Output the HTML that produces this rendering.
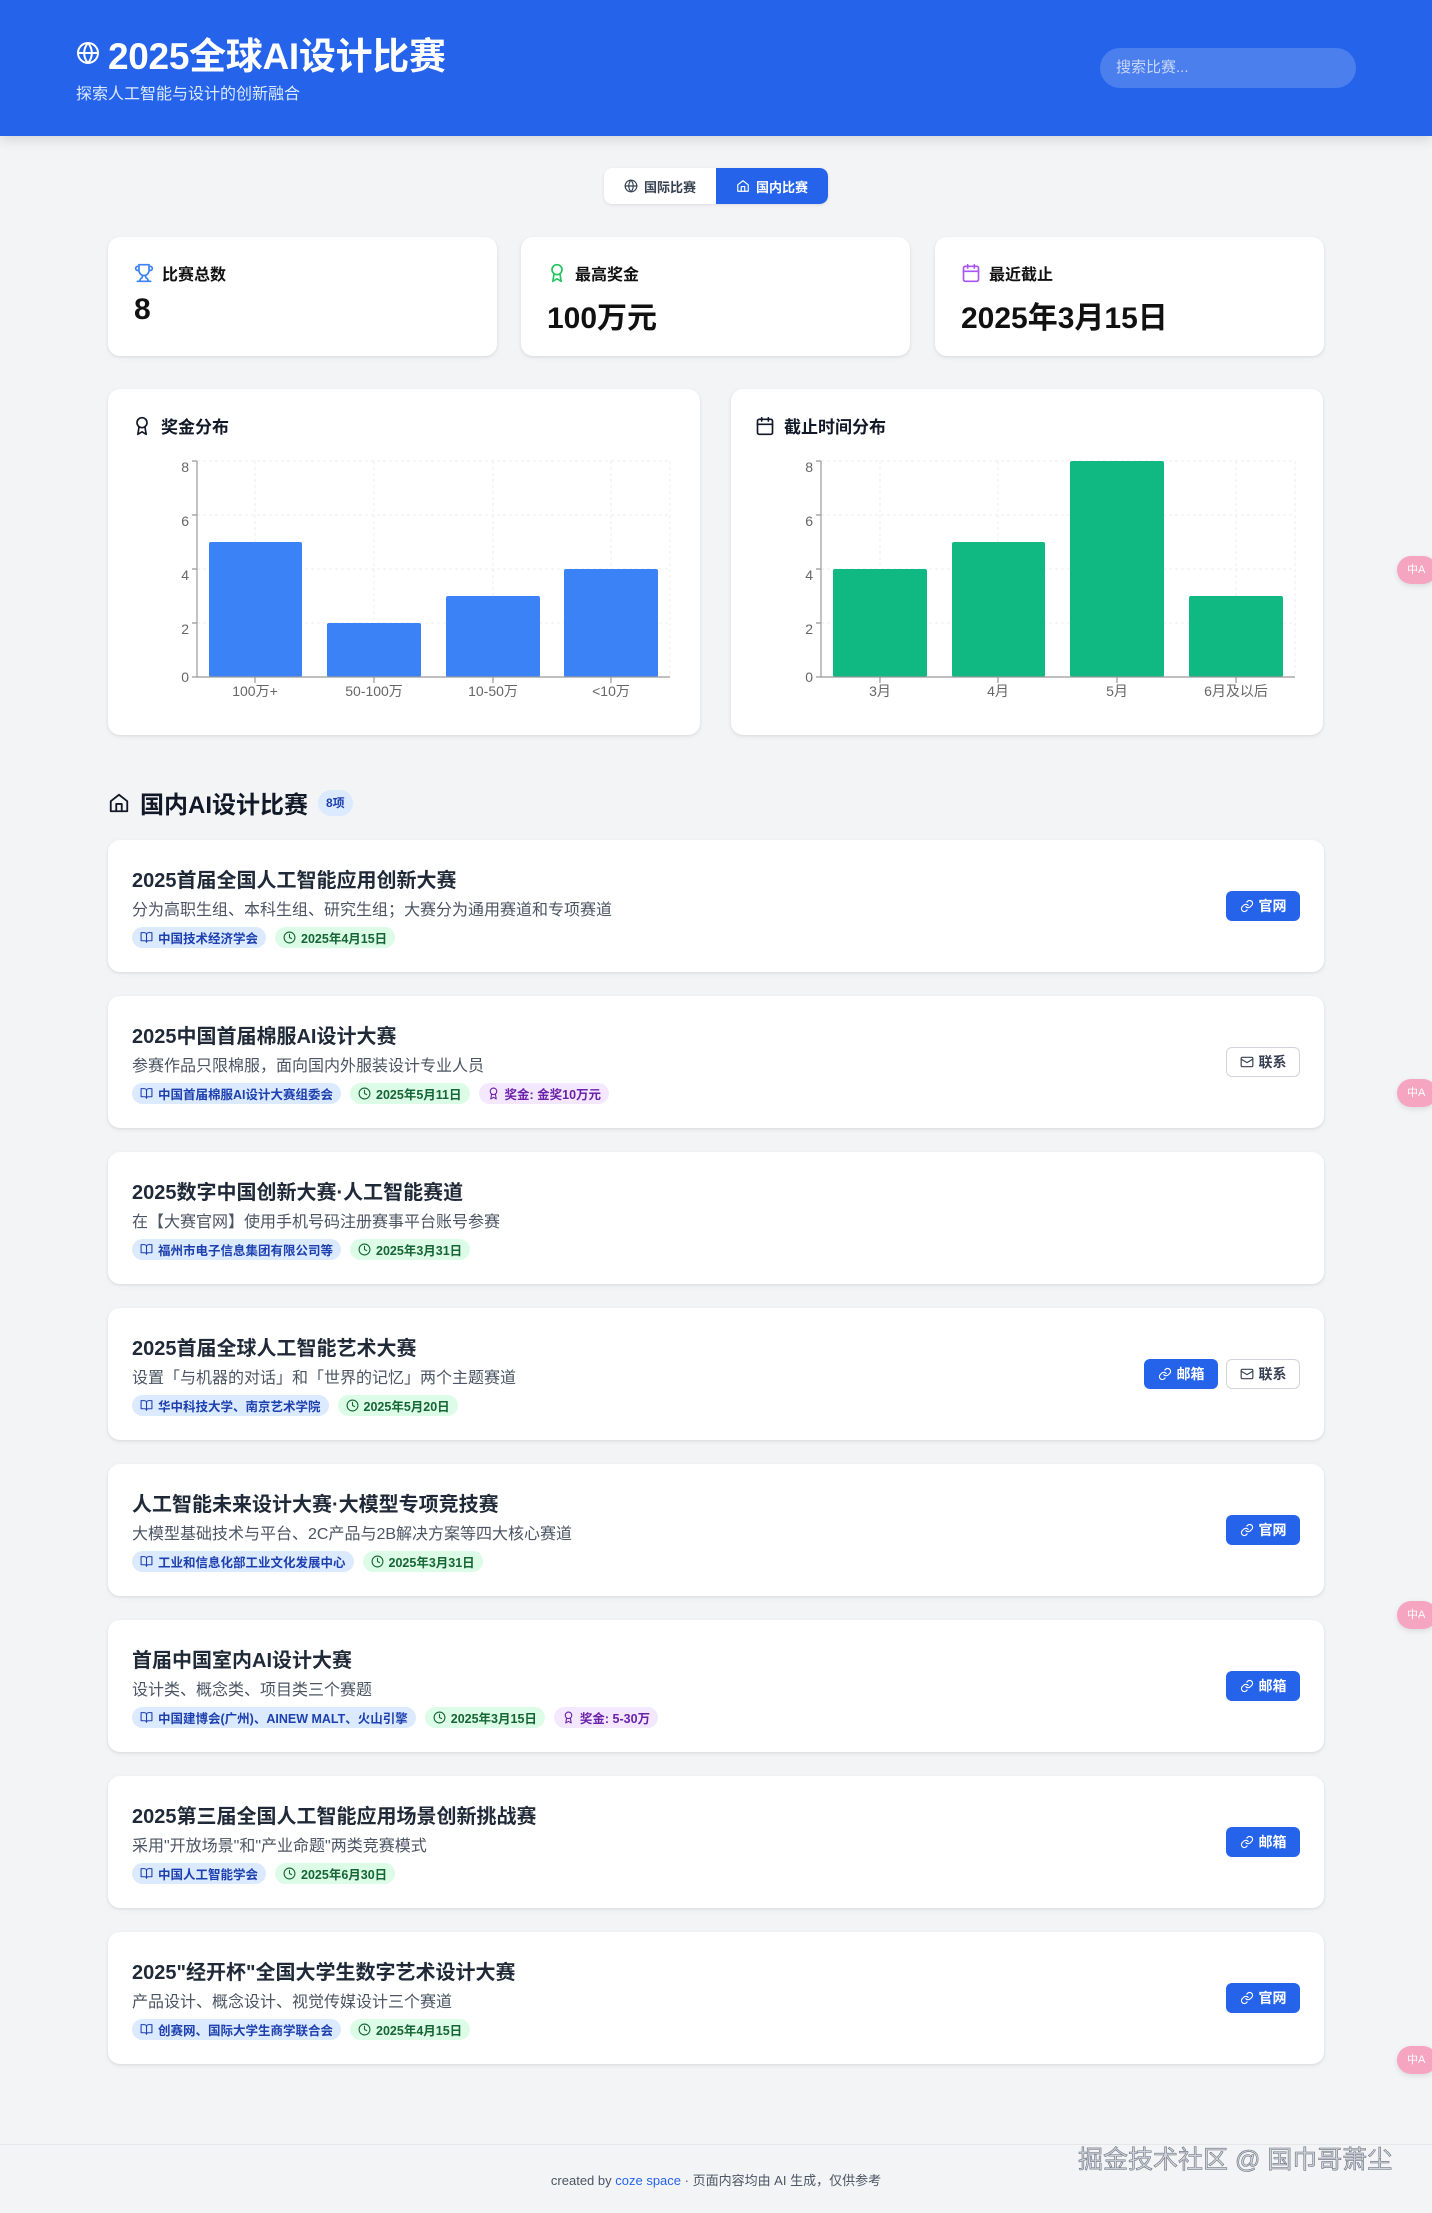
<!DOCTYPE html>
<html><head><meta charset="utf-8">
<style>
*{box-sizing:border-box;margin:0;padding:0}
body{width:1432px;height:2213px;background:#f3f4f6;font-family:"Liberation Sans","Noto Sans CJK SC",sans-serif;position:relative;overflow:hidden;color:#111827}
.abs{position:absolute}
header{position:absolute;left:0;top:0;width:1432px;height:136px;background:#2563eb;box-shadow:0 4px 12px rgba(0,0,0,.12)}
.card{position:absolute;background:#fff;border-radius:12px;box-shadow:0 1px 3px rgba(0,0,0,.08),0 2px 6px rgba(0,0,0,.04)}
svg.i{fill:none;stroke:currentColor;stroke-width:2;stroke-linecap:round;stroke-linejoin:round}
.stl{position:absolute;left:26px;top:24px;font-size:16px;font-weight:bold;display:flex;align-items:center;gap:8px;color:#111}
.stv{position:absolute;left:26px;top:56px;font-size:30px;font-weight:bold;color:#111}
.ct{position:absolute;left:24px;top:24px;font-size:17px;font-weight:bold;display:flex;align-items:center;gap:9px}
.comp h3{position:absolute;left:24px;top:24px;font-size:20px;font-weight:bold;color:#1f2937}
.comp p{position:absolute;left:24px;top:56px;font-size:16px;color:#4b5563}
.tags{position:absolute;left:24px;top:87px;display:flex;gap:9px}
.tag{height:21px;border-radius:11px;font-size:12.5px;font-weight:bold;padding:0 8px;display:flex;align-items:center;gap:5px;white-space:nowrap}
.tb{background:#dbeafe;color:#1e40af}.tg{background:#dcfce7;color:#166534}.tp{background:#f3e8ff;color:#6b21a8}
.btns{position:absolute;right:24px;top:51px;display:flex;gap:8px}
.btn{height:30px;width:74px;border-radius:6px;font-size:14px;font-weight:bold;display:flex;align-items:center;justify-content:center;gap:5px}
.bp{background:#2563eb;color:#fff}.bo{background:#fff;color:#374151;border:1px solid #d1d5db}
.fl{position:absolute;left:1397px;width:40px;height:28px;border-radius:14px;background:#f6a5c0;color:#fff;font-size:11px;padding-left:10px;line-height:28px;box-shadow:0 2px 6px rgba(0,0,0,.1)}
</style></head><body>
<header>
 <div class="abs" style="left:76px;top:26px;display:flex;align-items:center;gap:8px;color:#fff">
  <svg class="i" width="24" height="24" viewBox="0 0 24 24"><circle cx="12" cy="12" r="10"/><path d="M2 12h20M12 2a15 15 0 0 1 0 20M12 2a15 15 0 0 0 0 20"/></svg>
  <span style="font-size:37px;font-weight:bold;letter-spacing:-0.3px">2025全球AI设计比赛</span>
 </div>
 <div class="abs" style="left:76px;top:80px;font-size:16px;color:#dbeafe">探索人工智能与设计的创新融合</div>
 <div class="abs" style="left:1100px;top:48px;width:256px;height:40px;border-radius:20px;background:rgba(255,255,255,.18);color:#c7d7fb;font-size:15px;line-height:40px;padding-left:16px">搜索比赛...</div>
</header>

<div class="abs" style="left:604px;top:168px;width:224px;height:36px;border-radius:8px;background:#fff;box-shadow:0 1px 3px rgba(0,0,0,.1);display:flex;overflow:hidden;font-size:13px;font-weight:bold">
 <div style="width:112px;display:flex;align-items:center;justify-content:center;gap:6px;color:#374151"><svg class="i" width="14" height="14" viewBox="0 0 24 24"><circle cx="12" cy="12" r="10"/><path d="M2 12h20M12 2a15 15 0 0 1 0 20M12 2a15 15 0 0 0 0 20"/></svg>国际比赛</div>
 <div style="width:112px;display:flex;align-items:center;justify-content:center;gap:6px;background:#2563eb;color:#fff;border-radius:0 8px 8px 0"><svg class="i" width="14" height="14" viewBox="0 0 24 24"><path d="M3 10l9-7 9 7v11H3z"/><path d="M9 21v-8h6v8"/></svg>国内比赛</div>
</div>

<div class="card" style="left:108px;top:237px;width:389px;height:119px">
 <div class="stl"><svg class="i" width="20" height="20" viewBox="0 0 24 24" style="color:#3b82f6"><path d="M6 9H4.5a2.5 2.5 0 0 1 0-5H6M18 9h1.5a2.5 2.5 0 0 0 0-5H18M4 22h16M10 14.66V17c0 .55-.47.98-.97 1.21C7.85 18.75 7 20.24 7 22M14 14.66V17c0 .55.47.98.97 1.21C16.15 18.75 17 20.24 17 22M18 2H6v7a6 6 0 0 0 12 0V2z"/></svg>比赛总数</div>
 <div class="stv">8</div>
</div>
<div class="card" style="left:521px;top:237px;width:389px;height:119px">
 <div class="stl"><svg class="i" width="20" height="20" viewBox="0 0 24 24" style="color:#22c55e"><circle cx="12" cy="8" r="6"/><path d="M15.5 12.9L17 22l-5-3-5 3 1.5-9.1"/></svg>最高奖金</div>
 <div class="stv">100万元</div>
</div>
<div class="card" style="left:935px;top:237px;width:389px;height:119px">
 <div class="stl"><svg class="i" width="20" height="20" viewBox="0 0 24 24" style="color:#a855f7"><rect x="3" y="4" width="18" height="18" rx="2"/><path d="M16 2v4M8 2v4M3 10h18"/></svg>最近截止</div>
 <div class="stv">2025年3月15日</div>
</div>

<div class="card" style="left:108px;top:389px;width:592px;height:346px">
 <div class="ct"><svg class="i" width="20" height="20" viewBox="0 0 24 24"><circle cx="12" cy="8" r="6"/><path d="M15.5 12.9L17 22l-5-3-5 3 1.5-9.1"/></svg>奖金分布</div>
</div>
<div class="card" style="left:731px;top:389px;width:592px;height:346px">
 <div class="ct"><svg class="i" width="20" height="20" viewBox="0 0 24 24"><rect x="3" y="4" width="18" height="18" rx="2"/><path d="M16 2v4M8 2v4M3 10h18"/></svg>截止时间分布</div>
</div>
<svg class="abs" style="left:0;top:0" width="1432" height="760" font-family="Liberation Sans, Noto Sans CJK SC, sans-serif" font-size="14">
 <g stroke="#eee" stroke-dasharray="3 3" fill="none">
  <path d="M197 461H670M197 515H670M197 569H670M197 623H670M255 461V677M374 461V677M493 461V677M611 461V677M670 461V677"/>
  <path d="M821 461H1295M821 515H1295M821 569H1295M821 623H1295M880 461V677M998 461V677M1117 461V677M1236 461V677M1295 461V677"/>
 </g>
 <g fill="#3b82f6">
  <rect x="209" y="542" width="93" height="135" rx="2"/><rect x="327" y="623" width="94" height="54" rx="2"/><rect x="446" y="596" width="94" height="81" rx="2"/><rect x="564" y="569" width="94" height="108" rx="2"/>
 </g>
 <g fill="#10b981">
  <rect x="833" y="569" width="94" height="108" rx="2"/><rect x="952" y="542" width="93" height="135" rx="2"/><rect x="1070" y="461" width="94" height="216" rx="2"/><rect x="1189" y="596" width="94" height="81" rx="2"/>
 </g>
 <g stroke="#999" stroke-width="1.2" fill="none">
  <path d="M197 461V677H670M192 461H197M192 515H197M192 569H197M192 623H197M192 677H197M255 677V683M374 677V683M493 677V683M611 677V683"/>
  <path d="M821 461V677H1295M816 461H821M816 515H821M816 569H821M816 623H821M816 677H821M880 677V683M998 677V683M1117 677V683M1236 677V683"/>
 </g>
 <g text-anchor="end" fill="#666"><text x="189" y="472">8</text><text x="189" y="526">6</text><text x="189" y="580">4</text><text x="189" y="634">2</text><text x="189" y="682">0</text>
 <text x="813" y="472">8</text><text x="813" y="526">6</text><text x="813" y="580">4</text><text x="813" y="634">2</text><text x="813" y="682">0</text></g>
 <g text-anchor="middle" fill="#666"><text x="255" y="696">100万+</text><text x="374" y="696">50-100万</text><text x="493" y="696">10-50万</text><text x="611" y="696">&lt;10万</text>
 <text x="880" y="696">3月</text><text x="998" y="696">4月</text><text x="1117" y="696">5月</text><text x="1236" y="696">6月及以后</text></g>
</svg>

<div class="abs" style="left:108px;top:785px;display:flex;align-items:center;gap:10px">
 <svg class="i" width="22" height="22" viewBox="0 0 24 24"><path d="M3 10l9-7 9 7v11H3z"/><path d="M9 21v-8h6v8"/></svg>
 <span style="font-size:24px;font-weight:bold">国内AI设计比赛</span>
 <span style="background:#dbeafe;color:#1e40af;font-size:12px;font-weight:bold;border-radius:13px;padding:0 8px;height:26px;line-height:26px">8项</span>
</div>

<div class="card comp" style="left:108px;top:840px;width:1216px;height:132px">
 <h3>2025首届全国人工智能应用创新大赛</h3><p>分为高职生组、本科生组、研究生组；大赛分为通用赛道和专项赛道</p>
 <div class="tags"><span class="tag tb"><svg class="i" width="13" height="13" viewBox="0 0 24 24"><path d="M2 3h6a4 4 0 0 1 4 4v14a3 3 0 0 0-3-3H2zM22 3h-6a4 4 0 0 0-4 4v14a3 3 0 0 1 3-3h7z"/></svg>中国技术经济学会</span><span class="tag tg"><svg class="i" width="13" height="13" viewBox="0 0 24 24"><circle cx="12" cy="12" r="10"/><path d="M12 6v6l4 2"/></svg>2025年4月15日</span></div>
 <div class="btns"><span class="btn bp"><svg class="i" width="14" height="14" viewBox="0 0 24 24"><path d="M10 13a5 5 0 0 0 7.5.5l3-3a5 5 0 0 0-7-7l-1.7 1.7M14 11a5 5 0 0 0-7.5-.5l-3 3a5 5 0 0 0 7 7l1.7-1.7"/></svg>官网</span></div>
</div>
<div class="card comp" style="left:108px;top:996px;width:1216px;height:132px">
 <h3>2025中国首届棉服AI设计大赛</h3><p>参赛作品只限棉服，面向国内外服装设计专业人员</p>
 <div class="tags"><span class="tag tb"><svg class="i" width="13" height="13" viewBox="0 0 24 24"><path d="M2 3h6a4 4 0 0 1 4 4v14a3 3 0 0 0-3-3H2zM22 3h-6a4 4 0 0 0-4 4v14a3 3 0 0 1 3-3h7z"/></svg>中国首届棉服AI设计大赛组委会</span><span class="tag tg"><svg class="i" width="13" height="13" viewBox="0 0 24 24"><circle cx="12" cy="12" r="10"/><path d="M12 6v6l4 2"/></svg>2025年5月11日</span><span class="tag tp"><svg class="i" width="13" height="13" viewBox="0 0 24 24"><circle cx="12" cy="8" r="6"/><path d="M15.5 12.9L17 22l-5-3-5 3 1.5-9.1"/></svg>奖金: 金奖10万元</span></div>
 <div class="btns"><span class="btn bo"><svg class="i" width="14" height="14" viewBox="0 0 24 24"><rect x="2" y="4" width="20" height="16" rx="2"/><path d="M22 7l-10 6L2 7"/></svg>联系</span></div>
</div>
<div class="card comp" style="left:108px;top:1152px;width:1216px;height:132px">
 <h3>2025数字中国创新大赛·人工智能赛道</h3><p>在【大赛官网】使用手机号码注册赛事平台账号参赛</p>
 <div class="tags"><span class="tag tb"><svg class="i" width="13" height="13" viewBox="0 0 24 24"><path d="M2 3h6a4 4 0 0 1 4 4v14a3 3 0 0 0-3-3H2zM22 3h-6a4 4 0 0 0-4 4v14a3 3 0 0 1 3-3h7z"/></svg>福州市电子信息集团有限公司等</span><span class="tag tg"><svg class="i" width="13" height="13" viewBox="0 0 24 24"><circle cx="12" cy="12" r="10"/><path d="M12 6v6l4 2"/></svg>2025年3月31日</span></div>
</div>
<div class="card comp" style="left:108px;top:1308px;width:1216px;height:132px">
 <h3>2025首届全球人工智能艺术大赛</h3><p>设置「与机器的对话」和「世界的记忆」两个主题赛道</p>
 <div class="tags"><span class="tag tb"><svg class="i" width="13" height="13" viewBox="0 0 24 24"><path d="M2 3h6a4 4 0 0 1 4 4v14a3 3 0 0 0-3-3H2zM22 3h-6a4 4 0 0 0-4 4v14a3 3 0 0 1 3-3h7z"/></svg>华中科技大学、南京艺术学院</span><span class="tag tg"><svg class="i" width="13" height="13" viewBox="0 0 24 24"><circle cx="12" cy="12" r="10"/><path d="M12 6v6l4 2"/></svg>2025年5月20日</span></div>
 <div class="btns"><span class="btn bp"><svg class="i" width="14" height="14" viewBox="0 0 24 24"><path d="M10 13a5 5 0 0 0 7.5.5l3-3a5 5 0 0 0-7-7l-1.7 1.7M14 11a5 5 0 0 0-7.5-.5l-3 3a5 5 0 0 0 7 7l1.7-1.7"/></svg>邮箱</span><span class="btn bo"><svg class="i" width="14" height="14" viewBox="0 0 24 24"><rect x="2" y="4" width="20" height="16" rx="2"/><path d="M22 7l-10 6L2 7"/></svg>联系</span></div>
</div>
<div class="card comp" style="left:108px;top:1464px;width:1216px;height:132px">
 <h3>人工智能未来设计大赛·大模型专项竞技赛</h3><p>大模型基础技术与平台、2C产品与2B解决方案等四大核心赛道</p>
 <div class="tags"><span class="tag tb"><svg class="i" width="13" height="13" viewBox="0 0 24 24"><path d="M2 3h6a4 4 0 0 1 4 4v14a3 3 0 0 0-3-3H2zM22 3h-6a4 4 0 0 0-4 4v14a3 3 0 0 1 3-3h7z"/></svg>工业和信息化部工业文化发展中心</span><span class="tag tg"><svg class="i" width="13" height="13" viewBox="0 0 24 24"><circle cx="12" cy="12" r="10"/><path d="M12 6v6l4 2"/></svg>2025年3月31日</span></div>
 <div class="btns"><span class="btn bp"><svg class="i" width="14" height="14" viewBox="0 0 24 24"><path d="M10 13a5 5 0 0 0 7.5.5l3-3a5 5 0 0 0-7-7l-1.7 1.7M14 11a5 5 0 0 0-7.5-.5l-3 3a5 5 0 0 0 7 7l1.7-1.7"/></svg>官网</span></div>
</div>
<div class="card comp" style="left:108px;top:1620px;width:1216px;height:132px">
 <h3>首届中国室内AI设计大赛</h3><p>设计类、概念类、项目类三个赛题</p>
 <div class="tags"><span class="tag tb"><svg class="i" width="13" height="13" viewBox="0 0 24 24"><path d="M2 3h6a4 4 0 0 1 4 4v14a3 3 0 0 0-3-3H2zM22 3h-6a4 4 0 0 0-4 4v14a3 3 0 0 1 3-3h7z"/></svg>中国建博会(广州)、AINEW MALT、火山引擎</span><span class="tag tg"><svg class="i" width="13" height="13" viewBox="0 0 24 24"><circle cx="12" cy="12" r="10"/><path d="M12 6v6l4 2"/></svg>2025年3月15日</span><span class="tag tp"><svg class="i" width="13" height="13" viewBox="0 0 24 24"><circle cx="12" cy="8" r="6"/><path d="M15.5 12.9L17 22l-5-3-5 3 1.5-9.1"/></svg>奖金: 5-30万</span></div>
 <div class="btns"><span class="btn bp"><svg class="i" width="14" height="14" viewBox="0 0 24 24"><path d="M10 13a5 5 0 0 0 7.5.5l3-3a5 5 0 0 0-7-7l-1.7 1.7M14 11a5 5 0 0 0-7.5-.5l-3 3a5 5 0 0 0 7 7l1.7-1.7"/></svg>邮箱</span></div>
</div>
<div class="card comp" style="left:108px;top:1776px;width:1216px;height:132px">
 <h3>2025第三届全国人工智能应用场景创新挑战赛</h3><p>采用"开放场景"和"产业命题"两类竞赛模式</p>
 <div class="tags"><span class="tag tb"><svg class="i" width="13" height="13" viewBox="0 0 24 24"><path d="M2 3h6a4 4 0 0 1 4 4v14a3 3 0 0 0-3-3H2zM22 3h-6a4 4 0 0 0-4 4v14a3 3 0 0 1 3-3h7z"/></svg>中国人工智能学会</span><span class="tag tg"><svg class="i" width="13" height="13" viewBox="0 0 24 24"><circle cx="12" cy="12" r="10"/><path d="M12 6v6l4 2"/></svg>2025年6月30日</span></div>
 <div class="btns"><span class="btn bp"><svg class="i" width="14" height="14" viewBox="0 0 24 24"><path d="M10 13a5 5 0 0 0 7.5.5l3-3a5 5 0 0 0-7-7l-1.7 1.7M14 11a5 5 0 0 0-7.5-.5l-3 3a5 5 0 0 0 7 7l1.7-1.7"/></svg>邮箱</span></div>
</div>
<div class="card comp" style="left:108px;top:1932px;width:1216px;height:132px">
 <h3>2025"经开杯"全国大学生数字艺术设计大赛</h3><p>产品设计、概念设计、视觉传媒设计三个赛道</p>
 <div class="tags"><span class="tag tb"><svg class="i" width="13" height="13" viewBox="0 0 24 24"><path d="M2 3h6a4 4 0 0 1 4 4v14a3 3 0 0 0-3-3H2zM22 3h-6a4 4 0 0 0-4 4v14a3 3 0 0 1 3-3h7z"/></svg>创赛网、国际大学生商学联合会</span><span class="tag tg"><svg class="i" width="13" height="13" viewBox="0 0 24 24"><circle cx="12" cy="12" r="10"/><path d="M12 6v6l4 2"/></svg>2025年4月15日</span></div>
 <div class="btns"><span class="btn bp"><svg class="i" width="14" height="14" viewBox="0 0 24 24"><path d="M10 13a5 5 0 0 0 7.5.5l3-3a5 5 0 0 0-7-7l-1.7 1.7M14 11a5 5 0 0 0-7.5-.5l-3 3a5 5 0 0 0 7 7l1.7-1.7"/></svg>官网</span></div>
</div>

<div class="abs" style="left:0;top:2144px;width:1432px;height:69px;border-top:1px solid #e5e7eb;background:#f3f4f6"></div>
<div class="abs" style="left:0;top:2170px;width:1432px;text-align:center;font-size:13px;color:#4b5563">created by <span style="color:#2563eb">coze space</span> · 页面内容均由 AI 生成，仅供参考</div>
<div class="abs" style="left:1078px;top:2140px;font-size:25px;color:#d1d5db;-webkit-text-stroke:0.6px #6b7280">掘金技术社区 @ 国巾哥萧尘</div>

<div class="fl" style="top:556px">中A</div>
<div class="fl" style="top:1079px">中A</div>
<div class="fl" style="top:1601px">中A</div>
<div class="fl" style="top:2046px">中A</div>
</body></html>
